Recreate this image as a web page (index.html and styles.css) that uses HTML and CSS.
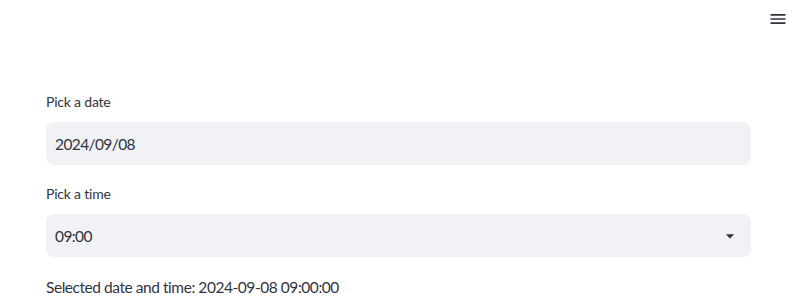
FILE: index.html
```html
<!DOCTYPE html>
<html>
<head>
<meta charset="utf-8">
<link rel="stylesheet" href="styles.css">
</head>
<body>
<header class="topbar">
  <button class="menu" aria-label="Main menu">
    <svg width="20" height="20" viewBox="0 0 24 24"><path d="M3 18h18v-2H3v2zm0-5h18v-2H3v2zm0-7v2h18V6H3z" fill="rgb(49,51,63)"/></svg>
  </button>
</header>
<main class="main">
  <div class="field">
    <label class="label">Pick a date</label>
    <div class="input">2024/09/08</div>
  </div>
  <div class="field">
    <label class="label">Pick a time</label>
    <div class="input select">
      <span>09:00</span>
      <svg class="caret" width="20" height="20" viewBox="0 0 24 24"><path d="M7 10l5 5 5-5z" fill="rgb(49,51,63)"/></svg>
    </div>
  </div>
  <p class="result">Selected date and time: 2024-09-08 09:00:00</p>
</main>
</body>
</html>
```
FILE: styles.css
```css
html, body {
  margin: 0;
  padding: 0;
  background: #fff;
}
body {
  font-family: "Source Sans Pro", "Lato", "Noto Sans", sans-serif;
  color: rgb(49, 51, 63);
  width: 797px;
  height: 305px;
  overflow: hidden;
}
.topbar {
  height: 38px;
  display: flex;
  justify-content: flex-end;
  align-items: center;
  padding-right: 9px;
}
.menu {
  border: none;
  background: none;
  padding: 0;
  width: 20px;
  height: 20px;
  display: flex;
}
.main {
  padding: 53px 46px 0 46px;
  display: flex;
  flex-direction: column;
  gap: 18px;
}
.field {
  display: flex;
  flex-direction: column;
}
.label {
  font-size: 14px;
  line-height: 21px;
  min-height: 21px;
  margin-bottom: 10px;
  letter-spacing: -0.2px;
}
.input {
  background: rgb(240, 242, 246);
  border-radius: 8px;
  height: 43px;
  box-sizing: border-box;
  padding: 0 9px;
  display: flex;
  align-items: center;
  font-size: 15.5px;
  letter-spacing: -0.6px;
}
.select {
  justify-content: space-between;
  padding-right: 11px;
}
.result {
  margin: 0;
  font-size: 15.5px;
  line-height: 24px;
  letter-spacing: -0.45px;
}
```
